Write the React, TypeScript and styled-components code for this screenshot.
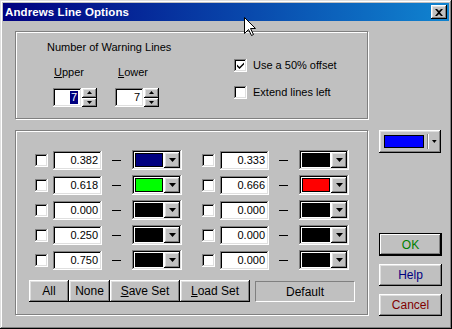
import React from "react"
import styled, { createGlobalStyle, css } from "styled-components"

const GlobalStyle = createGlobalStyle`
html, body {
    margin: 0;
    padding: 0;
    background: #c0c0c0;
}
* {
    box-sizing: border-box;
}
`

const raised = css`
box-shadow: inset -1px -1px #000, inset 1px 1px #fff, inset -2px -2px #808080, inset 2px 2px #dfdfdf;
`

const sunken = css`
box-shadow: inset -1px -1px #fff, inset 1px 1px #808080, inset -2px -2px #dfdfdf, inset 2px 2px #000;
`

const Window = styled.div`
position: relative;
width: 452px;
height: 329px;
padding: 3px;
background: #c0c0c0;
box-shadow: inset -1px -1px #000, inset 1px 1px #dfdfdf, inset -2px -2px #808080, inset 2px 2px #fff;
font-family: "Liberation Sans", Arial, sans-serif;
font-size: 11px;
color: #000;
display: flex;
flex-direction: column;
`

const TitleBar = styled.div`
height: 18px;
display: flex;
align-items: center;
justify-content: space-between;
padding: 0 2px 0 2px;
background: linear-gradient(to right, #000080, #1084d0);
`

const Title = styled.div`
color: #fff;
font-weight: 700;
font-size: 11.5px;
letter-spacing: 0.1px;
`

const CloseBtn = styled.div`
width: 16px;
height: 14px;
background: #c0c0c0;
${raised};
display: flex;
align-items: center;
justify-content: center;
`

const Body = styled.div`
flex: 1;
display: flex;
padding: 10px 0 0 12px;
`

const LeftCol = styled.div`
width: 353px;
display: flex;
flex-direction: column;
gap: 11px;
`

const Group = styled.div<{ h: number }>`
height: ${p => p.h}px;
border: 1px solid #808080;
box-shadow: inset 1px 1px 0 #fff, 1px 1px 0 #fff;
`

const WarnGroup = styled(Group)`
display: flex;
padding: 9px 0 0 31px;
`

const WarnLeft = styled.div`
width: 187px;
display: flex;
flex-direction: column;
`

const Label = styled.div`
line-height: 13px;
white-space: nowrap;
`

const SpinRow = styled.div`
display: flex;
gap: 18px;
margin-top: 12px;
padding-left: 6px;
`

const SpinCol = styled.div<{ w: number }>`
width: ${p => p.w}px;
display: flex;
flex-direction: column;
gap: 9px;
`

const SpinBox = styled.div`
display: flex;
`

const Edit = styled.div<{ w: number }>`
width: ${p => p.w}px;
height: 19px;
background: #fff;
${sunken};
display: flex;
align-items: center;
justify-content: flex-end;
padding-right: 4px;
line-height: 13px;
`

const Selected = styled.span`
background: #000080;
color: #fff;
padding: 0 1px;
`

const SpinBtns = styled.div`
width: 15px;
height: 19px;
display: flex;
flex-direction: column;
`

const SpinBtn = styled.div`
flex: 1;
background: #c0c0c0;
${raised};
display: flex;
align-items: center;
justify-content: center;
`

const WarnRight = styled.div`
display: flex;
flex-direction: column;
gap: 14px;
padding-top: 18px;
`

const CheckRow = styled.div`
display: flex;
align-items: center;
gap: 6px;
`

const Check = styled.div`
width: 13px;
height: 13px;
background: #fff;
${sunken};
display: flex;
align-items: center;
justify-content: center;
flex-shrink: 0;
`

const LinesGroup = styled(Group)`
padding: 19px 0 0 13px;
display: flex;
flex-direction: column;
`

const Columns = styled.div`
display: flex;
gap: 20px;
padding-left: 6px;
`

const LineCol = styled.div`
display: flex;
flex-direction: column;
gap: 5px;
`

const LineRow = styled.div`
display: flex;
align-items: center;
height: 20px;
`

const Dash = styled.div`
width: 9px;
height: 1px;
background: #000;
margin: 0 11px 0 10px;
`

const ColorCombo = styled.div`
width: 50px;
height: 20px;
background: #fff;
${sunken};
display: flex;
padding: 2px;
gap: 1px;
`

const Swatch = styled.div<{ c: string }>`
flex: 1;
margin: 1px 0 1px 1px;
background: ${p => p.c};
border: 1px solid #000;
`

const DropBtn = styled.div`
width: 16px;
background: #c0c0c0;
${raised};
display: flex;
align-items: center;
justify-content: center;
`

const ButtonRow = styled.div`
display: flex;
margin-top: 10px;
`

const Btn = styled.div<{ w: number; c?: string }>`
width: ${p => p.w}px;
height: 22px;
background: #c0c0c0;
${raised};
display: flex;
align-items: center;
justify-content: center;
color: ${p => p.c || "#000"};
font-size: 12px;
white-space: nowrap;
`

const DefaultPanel = styled.div`
width: 100px;
height: 21px;
margin: 1px 0 0 5px;
border: 1px solid;
border-color: #808080 #fff #fff #808080;
text-align: center;
padding-top: 3px;
font-size: 12px;
`

const RightCol = styled.div`
width: 63px;
margin-left: 11px;
display: flex;
flex-direction: column;
padding-top: 99px;
`

const BigCombo = styled.div`
width: 62px;
height: 23px;
background: #c0c0c0;
${raised};
display: flex;
align-items: center;
padding: 0 4px 0 5px;
`

const BigSwatch = styled.div`
width: 43px;
height: 13px;
background: #0000ff;
border: 1px solid #000;
`

const Sep = styled.div`
width: 2px;
height: 15px;
margin: 0 3px 0 3px;
border-left: 1px solid #808080;
border-right: 1px solid #fff;
`

const DefaultBtn = styled(Btn)`
box-shadow: inset 0 0 0 1px #000, inset -2px -2px #000, inset 2px 2px #fff, inset -3px -3px #808080;
`

const Cursor = styled.svg`
position: absolute;
left: 244px;
top: 17px;
`

const Arrow = ({ up }: { up?: boolean }) => (
    <svg width="7" height="4" viewBox="0 0 7 4">
        <path d={up ? "M3.5 0 L7 4 L0 4 Z" : "M0 0 L7 0 L3.5 4 Z"} fill="#000" />
    </svg>
)

const SmallArrow = ({ up }: { up?: boolean }) => (
    <svg width="5" height="3" viewBox="0 0 5 3">
        <path d={up ? "M2.5 0 L5 3 L0 3 Z" : "M0 0 L5 0 L2.5 3 Z"} fill="#000" />
    </svg>
)

const CheckMark = () => (
    <svg width="9" height="9" viewBox="0 0 9 9">
        <path d="M1 3.5 L3.5 6 L8 1.5 L8 3.5 L3.5 8 L1 5.5 Z" fill="#000" />
    </svg>
)

const Spin = ({ value, selected }: { value: string; selected?: boolean }) => (
    <SpinBox>
        <Edit w={29}>{selected ? <Selected>{value}</Selected> : value}</Edit>
        <SpinBtns>
            <SpinBtn><SmallArrow up /></SpinBtn>
            <SpinBtn><SmallArrow /></SpinBtn>
        </SpinBtns>
    </SpinBox>
)

const LineItem = ({ value, color }: { value: string; color: string }) => (
    <LineRow>
        <Check />
        <Edit w={49} style={{ marginLeft: 5 }}>{value}</Edit>
        <Dash />
        <ColorCombo>
            <Swatch c={color} />
            <DropBtn><Arrow /></DropBtn>
        </ColorCombo>
    </LineRow>
)

const leftLines = [
    { value: "0.382", color: "#000080" },
    { value: "0.618", color: "#00ff00" },
    { value: "0.000", color: "#000" },
    { value: "0.250", color: "#000" },
    { value: "0.750", color: "#000" },
]

const rightLines = [
    { value: "0.333", color: "#000" },
    { value: "0.666", color: "#ff0000" },
    { value: "0.000", color: "#000" },
    { value: "0.000", color: "#000" },
    { value: "0.000", color: "#000" },
]

const App = () => {
    return (
        <>
            <GlobalStyle />
            <Window>
                <TitleBar>
                    <Title>Andrews Line Options</Title>
                    <CloseBtn>
                        <svg width="8" height="7" viewBox="0 0 8 7">
                            <path d="M0 0 L2 0 L4 2 L6 0 L8 0 L5 3.5 L8 7 L6 7 L4 5 L2 7 L0 7 L3 3.5 Z" fill="#000" />
                        </svg>
                    </CloseBtn>
                </TitleBar>
                <Body>
                    <LeftCol>
                        <WarnGroup h={88}>
                            <WarnLeft>
                                <Label>Number of Warning Lines</Label>
                                <SpinRow>
                                    <SpinCol w={44}>
                                        <Label style={{ paddingLeft: 1 }}><u>U</u>pper</Label>
                                        <Spin value="7" selected />
                                    </SpinCol>
                                    <SpinCol w={44}>
                                        <Label style={{ paddingLeft: 3 }}><u>L</u>ower</Label>
                                        <Spin value="7" />
                                    </SpinCol>
                                </SpinRow>
                            </WarnLeft>
                            <WarnRight>
                                <CheckRow>
                                    <Check><CheckMark /></Check>
                                    <Label>Use a 50% offset</Label>
                                </CheckRow>
                                <CheckRow>
                                    <Check />
                                    <Label>Extend lines left</Label>
                                </CheckRow>
                            </WarnRight>
                        </WarnGroup>
                        <LinesGroup h={185}>
                            <Columns>
                                <LineCol>
                                    {leftLines.map((l, i) => <LineItem key={i} {...l} />)}
                                </LineCol>
                                <LineCol>
                                    {rightLines.map((l, i) => <LineItem key={i} {...l} />)}
                                </LineCol>
                            </Columns>
                            <ButtonRow>
                                <Btn w={40}>All</Btn>
                                <Btn w={41}>None</Btn>
                                <Btn w={70}><u>S</u>ave Set</Btn>
                                <Btn w={70}><u>L</u>oad Set</Btn>
                                <DefaultPanel>Default</DefaultPanel>
                            </ButtonRow>
                        </LinesGroup>
                    </LeftCol>
                    <RightCol>
                        <BigCombo>
                            <BigSwatch />
                            <Sep />
                            <SmallArrow />
                        </BigCombo>
                        <DefaultBtn w={63} c="#008000" style={{ marginTop: 80, height: 23 }}>OK</DefaultBtn>
                        <Btn w={63} c="#000080" style={{ marginTop: 8 }}>Help</Btn>
                        <Btn w={63} c="#800000" style={{ marginTop: 8 }}>Cancel</Btn>
                    </RightCol>
                </Body>
                <Cursor width="13" height="20" viewBox="0 0 13 20">
                    <path d="M0.5 0.5 L0.5 16.5 L4.5 12.5 L7.5 18.5 L9.5 17.5 L6.5 11.5 L11.5 11.5 Z" fill="#fff" stroke="#000" strokeWidth="1" />
                </Cursor>
            </Window>
        </>
    )
}

export default App
